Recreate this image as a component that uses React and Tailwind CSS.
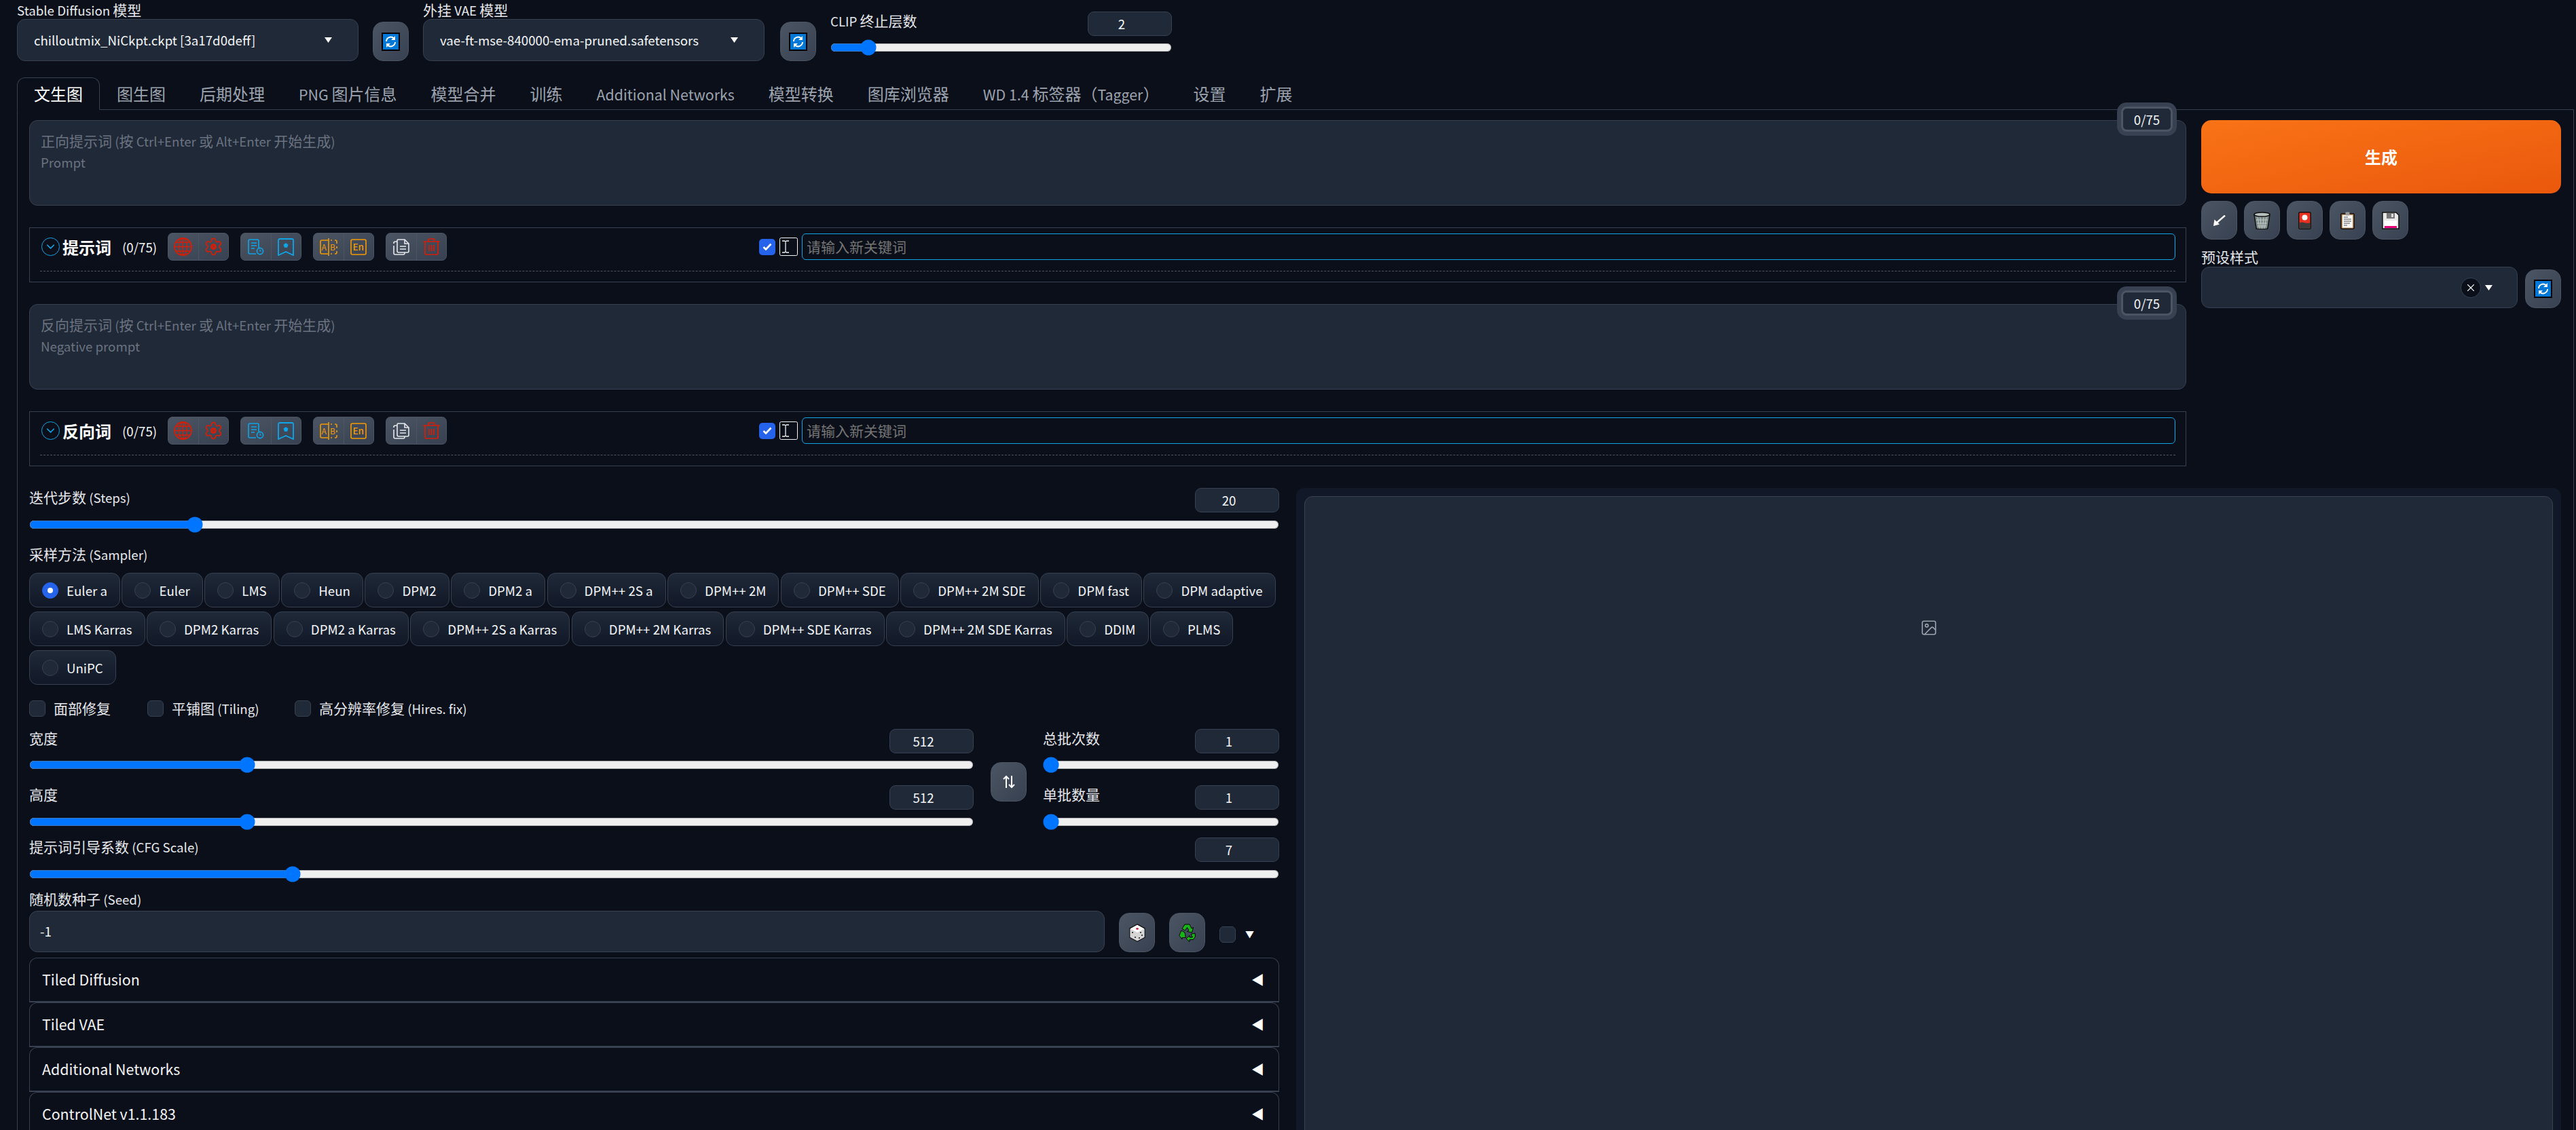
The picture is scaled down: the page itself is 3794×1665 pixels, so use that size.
import { ChevronDown, Image, Settings, X } from 'lucide-react';

const RED = '#d81e06';
const BLUE = '#0ea5e9';
const AMBER = '#f59a00';

// Latin runs are narrower than the CJK font's own latin glyphs
function T({ children }) {
  return String(children).split(/([\x00-\x7f]+)/).map((part, i) =>
    /^[\x00-\x7f]+$/.test(part) ? <span key={i} className="text-[0.89em]">{part}</span> : part
  );
}

function RefreshIcon() {
  return (
    <svg width="27" height="27" viewBox="0 0 27 27">
      <rect width="27" height="27" fill="#000" />
      <rect x="2" y="2" width="23" height="23" fill="#0078d7" />
      <path d="M7 13a6.5 6.5 0 0 1 11-4.5" fill="none" stroke="#fff" strokeWidth="2" />
      <path d="M20 14a6.5 6.5 0 0 1-11 4.5" fill="none" stroke="#fff" strokeWidth="2" />
      <path d="M20 5v6h-6zM7 22v-6h6z" fill="#fff" />
    </svg>
  );
}

function Caret() {
  return (
    <svg width="11" height="8" viewBox="0 0 11 8" className="shrink-0">
      <path d="M0 0h11L5.5 8z" fill="#fff" />
    </svg>
  );
}

function ToolButton({ children, className = 'w-[53px] h-[58px]' }) {
  return (
    <button className={`flex shrink-0 items-center justify-center rounded-[15px] border border-[#4b5563] bg-linear-to-br from-[#4b5563] to-[#374151] ${className}`}>
      {children}
    </button>
  );
}

function Label({ children, className = '' }) {
  return <div className={`h-[31px] leading-[27px] text-[21px] text-[#e5e7eb] ${className}`}><T>{children}</T></div>;
}

function Dropdown({ text }) {
  return (
    <div className="flex h-[62px] items-center rounded-[12px] border border-[#374151] bg-[#1f2937] pl-[24px] pr-[38px]">
      <span className="flex-1 text-[21px] text-[#f3f4f6]"><T>{text}</T></span>
      <Caret />
    </div>
  );
}

function Slider({ label, min, max, value, tight }) {
  return (
    <div>
      <div className="flex items-start justify-between">
        <Label>{label}</Label>
        <div className="flex h-[36px] w-[124px] items-center justify-center rounded-[9px] border border-[#374151] bg-[#1f2937] pr-[24px] text-[21px] text-[#f3f4f6]">
          <T>{value}</T>
        </div>
      </div>
      <div className={tight ? 'pt-[5px]' : 'pt-[6px]'}>
        <input type="range" min={min} max={max} defaultValue={value} className="block h-4 w-full [zoom:1.5]" />
      </div>
    </div>
  );
}

function GlobeIcon() {
  return (
    <svg width="27" height="27" viewBox="0 0 27 27" fill="none" stroke={RED} strokeWidth="1.3">
      <circle cx="13.5" cy="13.5" r="12.5" strokeWidth="1.8" />
      <ellipse cx="13.5" cy="13.5" rx="6" ry="12.5" />
      <path d="M13.5 1v25M1 13.5h25M3 7h21M3 20h21" />
    </svg>
  );
}

function GearIcon() {
  return (
    <Settings size={29} color={RED} strokeWidth={1.4}>
      <circle cx="12" cy="12" r="1.5" />
    </Settings>
  );
}

function HistoryIcon() {
  return (
    <svg width="24" height="24" viewBox="0 0 24 24" fill="none" stroke={BLUE} strokeWidth="1.6">
      <path d="M12 22H3a2 2 0 0 1-2-2V3a2 2 0 0 1 2-2h11a2 2 0 0 1 2 2v10" />
      <path d="M5 6h8M5 10h8M5 14h5" />
      <circle cx="18" cy="18" r="4.6" />
      <path d="M18 15.6V18h2" strokeWidth="1.2" />
    </svg>
  );
}

function BookmarkIcon() {
  return (
    <svg width="24" height="26" viewBox="0 0 24 26" fill="none" stroke={BLUE} strokeWidth="1.8">
      <path d="M3 1h18a2 2 0 0 1 2 2v22l-11-5-11 5V3a2 2 0 0 1 2-2z" />
      <path d="M12 7l3.5 2.6-1.4 4.2H9.900L8.500 9.600z" fill={BLUE} stroke="none" />
    </svg>
  );
}

function SplitIcon() {
  return (
    <svg width="26" height="26" viewBox="0 0 26 26" fill="none" stroke={AMBER} strokeWidth="1.6">
      <path d="M12 3H3a2 2 0 0 0-2 2v16a2 2 0 0 0 2 2h9" />
      <path d="M16 3h2M22 3h1a2 2 0 0 1 2 2v3M25 12v3M25 19v2a2 2 0 0 1-2 2h-1M18 23h-2" />
      <path d="M13 0v26" />
      <text x="2.500" y="18" fontSize="12" fill={AMBER} stroke="none" fontFamily="Noto Sans CJK SC">A</text>
      <text x="15" y="18" fontSize="12" fill={AMBER} stroke="none" fontFamily="Noto Sans CJK SC">B</text>
    </svg>
  );
}

function EnIcon() {
  return (
    <svg width="24" height="24" viewBox="0 0 24 24" fill="none" stroke={AMBER} strokeWidth="1.6">
      <rect x="1" y="1" width="22" height="22" rx="2" />
      <text x="3.500" y="17" fontSize="13.500" fontWeight="500" fill={AMBER} stroke="none" fontFamily="Noto Sans CJK SC">En</text>
    </svg>
  );
}

function CopyIcon() {
  return (
    <svg width="24" height="25" viewBox="0 0 24 25" fill="none" stroke="#e5e7eb" strokeWidth="1.6">
      <path d="M7 2h10l6 6v11a2 2 0 0 1-2 2H8a2 2 0 0 1-2-2V3z" />
      <path d="M17 2v6h6" />
      <path d="M6 5H3a2 2 0 0 0-2 2v1M1 11v11a2 2 0 0 0 2 2h12a2 2 0 0 0 2-2v-1" />
      <path d="M10 12h9M10 16h9" />
    </svg>
  );
}

function BinIcon() {
  return (
    <svg width="25" height="25" viewBox="0 0 25 25" fill="none" stroke={RED} strokeWidth="1.7">
      <path d="M0 5h25M8 5V2a1 1 0 0 1 1-1h7a1 1 0 0 1 1 1v3" />
      <path d="M3 5v17a2 2 0 0 0 2 2h15a2 2 0 0 0 2-2V5" />
      <path d="M9 10v9M12.500 10v9M16 10v9" />
    </svg>
  );
}

function IconGroup({ left, right }) {
  return (
    <div className="flex h-[41px] w-[90px] shrink-0 rounded-[7px] border border-[#4b5563] bg-linear-to-br from-[#4b5563] to-[#374151]">
      <div className="flex flex-1 items-center justify-center border-r border-[#4b5563]">{left}</div>
      <div className="flex flex-1 items-center justify-center">{right}</div>
    </div>
  );
}

function CursorBox() {
  return (
    <svg width="27" height="27" viewBox="0 0 27 27" className="shrink-0" fill="none">
      <rect x="0.500" y="0.500" width="26" height="26" rx="2" stroke="#f3f4f6" />
      <path d="M4 5h3.500L9 6l1.500-1H14M9 6v15M4 22h3.500L9 21l1.500 1H14" stroke="#f3f4f6" strokeWidth="1.300" />
    </svg>
  );
}

function TagPanel({ title }) {
  return (
    <div className="border border-[#374151] px-[15px] pt-[7px]">
      <div className="flex items-center border-b border-dashed border-[#4b5563] pb-[15px]">
        <div className="flex w-[1059px] shrink-0 items-center">
          <div className="ml-[2px] flex h-[27px] w-[27px] shrink-0 items-center justify-center rounded-full border-[1.5px] border-[#0ea5e9]">
            <ChevronDown size={19} color="#0ea5e9" strokeWidth={1.8} />
          </div>
          <span className="ml-[4px] w-[88px] text-[24px] font-bold text-white">{title}</span>
          <span className="w-[67px] text-[21px] text-[#f3f4f6]"><T>(0/75)</T></span>
          <div className="flex gap-[17px]">
            <IconGroup left={<GlobeIcon />} right={<GearIcon />} />
            <IconGroup left={<HistoryIcon />} right={<BookmarkIcon />} />
            <IconGroup left={<SplitIcon />} right={<EnIcon />} />
            <IconGroup left={<CopyIcon />} right={<BinIcon />} />
          </div>
        </div>
        <div className="flex flex-1 items-center">
          <div className="flex h-[24px] w-[24px] shrink-0 items-center justify-center rounded-[5px] bg-[#2563eb]">
            <svg width="14" height="11" viewBox="0 0 14 11"><path d="M1.500 6l3.500 3.500L12.500 1.500" fill="none" stroke="#fff" strokeWidth="2.600" /></svg>
          </div>
          <div className="ml-[6px]"><CursorBox /></div>
          <div className="ml-[6px] flex h-[39px] flex-1 items-center rounded-[6px] border border-[#0ea5e9] pl-[6px] text-[21px] text-[#757575]">
            请输入新关键词
          </div>
        </div>
      </div>
      <div className="h-[15px]" />
    </div>
  );
}

function PromptBox({ hint, sub }) {
  return (
    <div className="relative h-[126px] rounded-[12px] border border-[#374151] bg-[#1f2937] px-[16px] pt-[14px] text-[21px] leading-[30px] text-[#6b7280]">
      <div><T>{hint}</T></div>
      <div><T>{sub}</T></div>
      <div className="absolute right-[19px] top-[-21px] flex h-[37px] w-[76px] items-center justify-center rounded-[8px] border-[3px] border-[#4b5563] bg-[#1f2937] text-[21px] text-[#f3f4f6] shadow-[0_0_0_6px_#374151]">
        <T>0/75</T>
      </div>
    </div>
  );
}

function TrashEmoji() {
  return (
    <svg width="25" height="26" viewBox="0 0 25 26">
      <path d="M1 4h23l-3 20a2 2 0 0 1-2 1.500H6A2 2 0 0 1 4 24z" fill="#7d8a88" stroke="#111" strokeWidth="1.500" />
      <ellipse cx="12.500" cy="4" rx="11.500" ry="3" fill="#b6c0bd" stroke="#111" strokeWidth="1.500" />
      <path d="M6 8l3 17M10 8l1.500 17M15 8l-1.500 17M19 8l-3 17M4 12h17M5 17h15M6 21h13" stroke="#c7d0cd" strokeWidth="0.900" fill="none" />
    </svg>
  );
}

function CardEmoji() {
  return (
    <svg width="19" height="26" viewBox="0 0 19 26">
      <rect x="0.750" y="0.750" width="17.500" height="24.500" rx="2" fill="#e8321f" stroke="#111" strokeWidth="1.500" />
      <circle cx="9.500" cy="8.500" r="4" fill="#fff" />
      <path d="M1.500 25v-8c4-3 7-1 9-.5s5 .5 7-.5v9z" fill="#3a3a3a" />
    </svg>
  );
}

function ClipboardEmoji() {
  return (
    <svg width="21" height="26" viewBox="0 0 21 26">
      <rect x="0.750" y="2.750" width="19.500" height="22.500" rx="2" fill="#b8844f" stroke="#111" strokeWidth="1.500" />
      <rect x="3" y="5" width="15" height="18.500" fill="#f5f5f5" />
      <rect x="7.500" y="0.500" width="6" height="5" rx="1" fill="#999" />
      <path d="M5 8h6M5 11h11M5 14h11M5 17h9M5 20h5" stroke="#555" strokeWidth="1.200" />
    </svg>
  );
}

function FloppyEmoji() {
  return (
    <svg width="26" height="26" viewBox="0 0 26 26">
      <path d="M1 1h20l4 4v20H1z" fill="#e8e8e8" stroke="#111" strokeWidth="1.500" />
      <rect x="7" y="2" width="12" height="8" fill="#777" />
      <rect x="14" y="3" width="3" height="5" fill="#ddd" />
      <rect x="4" y="13" width="18" height="11" fill="#fff" />
      <rect x="4" y="21" width="18" height="3" fill="#e6007e" />
    </svg>
  );
}

function DiceEmoji() {
  return (
    <svg width="24" height="27" viewBox="0 0 24 27">
      <path d="M12 1l11 6v13l-11 6-11-6V7z" fill="#efefef" stroke="#111" strokeWidth="1.500" />
      <path d="M1.500 7.500L12 13l10.500-5.500v12.500L12 25.500 1.500 20z" fill="#d6d6d6" />
      <path d="M12 1.800l10 5.500L12 12.800 2 7.300z" fill="#fff" />
      <ellipse cx="12" cy="7.500" rx="1.800" ry="1.300" fill="#c8102e" />
      <circle cx="5" cy="13" r="1.100" fill="#222" /><circle cx="9" cy="20" r="1.100" fill="#222" />
      <circle cx="15" cy="21" r="1.100" fill="#222" /><circle cx="19" cy="17" r="1.100" fill="#222" /><circle cx="17" cy="13" r="1.100" fill="#222" />
    </svg>
  );
}

function RecycleEmoji() {
  return (
    <svg width="25" height="27" viewBox="0 0 25 27">
      <g fill="#17b317" stroke="#000" strokeWidth="1" strokeLinejoin="round">
        <path d="M9 1h7l3 6 2.500-1.500L19.500 13l-7-1.500 2.500-1.500-2.500-4.500L9.500 10 5 7.500z" />
        <path d="M4 10l5 3 1.500 7.500H5V23L.8 17.500z" />
        <path d="M24 14l.5 5-3 4.500H16V26.500L11 22l5-4.500v2.500h4.500L18 15.500z" />
      </g>
    </svg>
  );
}

function Checkbox({ text, className = '' }) {
  return (
    <div className={`flex items-center ${className}`}>
      <div className="h-[24px] w-[24px] rounded-[6px] border border-[#374151] bg-[#1f2937]" />
      <span className="ml-[12px] text-[21px] text-[#e5e7eb]"><T>{text}</T></span>
    </div>
  );
}

function Accordion({ title }) {
  return (
    <div className="flex h-[66px] shrink-0 items-center justify-between rounded-t-[12px] border-x border-t border-b-2 border-[#374151] pb-[3px] pl-[18px] pr-[21px]">
      <span className="text-[24px] text-[#f3f4f6]"><T>{title}</T></span>
      <span className="text-[19px] leading-none text-white">◀</span>
    </div>
  );
}

const samplers = [
  'Euler a', 'Euler', 'LMS', 'Heun', 'DPM2', 'DPM2 a', 'DPM++ 2S a', 'DPM++ 2M', 'DPM++ SDE', 'DPM++ 2M SDE', 'DPM fast', 'DPM adaptive',
  'LMS Karras', 'DPM2 Karras', 'DPM2 a Karras', 'DPM++ 2S a Karras', 'DPM++ 2M Karras', 'DPM++ SDE Karras', 'DPM++ 2M SDE Karras', 'DDIM', 'PLMS',
  'UniPC',
];

const tabs = ['文生图', '图生图', '后期处理', 'PNG 图片信息', '模型合并', '训练', 'Additional Networks', '模型转换', '图库浏览器', 'WD 1.4 标签器（Tagger）', '设置', '扩展'];

export default function App() {
  return (
    <div className="h-[1665px] w-[3794px] overflow-hidden bg-[#0b0f19] font-['Noto_Sans_CJK_SC','Noto_Sans',sans-serif] text-[21px] text-[#f3f4f6]">
      {/* model selectors */}
      <div className="flex h-[114px] items-start pl-[25px]">
        <div className="w-[503px]">
          <div className="h-[28px] text-[21px] leading-[28px] text-[#e5e7eb]"><T>Stable Diffusion 模型</T></div>
          <Dropdown text="chilloutmix_NiCkpt.ckpt [3a17d0deff]" />
        </div>
        <div className="ml-[21px] mt-[32px]"><ToolButton><RefreshIcon /></ToolButton></div>
        <div className="ml-[21px] w-[503px]">
          <div className="h-[28px] text-[21px] leading-[28px] text-[#e5e7eb]"><T>外挂 VAE 模型</T></div>
          <Dropdown text="vae-ft-mse-840000-ema-pruned.safetensors" />
        </div>
        <div className="ml-[23px] mt-[32px]"><ToolButton><RefreshIcon /></ToolButton></div>
        <div className="ml-[21px] mt-[17px] w-[503px]">
          <Slider label="CLIP 终止层数" min={1} max={12} value={2} tight />
        </div>
      </div>

      <div className="ml-[25px] mr-[3px]">
        {/* tabs */}
        <div className="flex h-[48px] border-b border-[#374151]">
          {tabs.map((tab, i) => (
            <button
              key={tab}
              className={`h-[48px] border px-[24px] text-[24px] ${i === 0 ? 'rounded-t-[12px] border-[#374151] border-b-[#0b0f19] text-white' : 'border-transparent text-[#9ca3af]'}`}
            >
              <T>{tab}</T>
            </button>
          ))}
        </div>

        <div className="h-[1600px] border-x border-[#374151] pl-[17px] pr-[18px] pt-[15px]">
          <div className="flex gap-[22px]">
            <div className="flex w-[3177px] flex-col gap-[32px]">
              <PromptBox hint="正向提示词 (按 Ctrl+Enter 或 Alt+Enter 开始生成)" sub="Prompt" />
              <TagPanel title="提示词" />
              <PromptBox hint="反向提示词 (按 Ctrl+Enter 或 Alt+Enter 开始生成)" sub="Negative prompt" />
              <TagPanel title="反向词" />
            </div>
            <div className="w-[530px]">
              <button className="h-[108px] w-full rounded-[15px] bg-linear-to-br from-[#f97316] to-[#ea580c] text-[24px] font-bold text-white">生成</button>
              <div className="mt-[11px] flex gap-[10px]">
                <ToolButton className="h-[57px] w-[53px]">
                  <svg width="18" height="16" viewBox="0 0 18 16" fill="none"><path d="M17 .5L5 11" stroke="#fff" strokeWidth="2.400" /><path d="M0 16l1.500-9.500 7.500 7z" fill="#fff" /></svg>
                </ToolButton>
                <ToolButton className="h-[57px] w-[53px]"><TrashEmoji /></ToolButton>
                <ToolButton className="h-[57px] w-[53px]"><CardEmoji /></ToolButton>
                <ToolButton className="h-[57px] w-[53px]"><ClipboardEmoji /></ToolButton>
                <ToolButton className="h-[57px] w-[53px]"><FloppyEmoji /></ToolButton>
              </div>
              <div className="mt-[12px] h-[28px] text-[21px] leading-[26px] text-[#e5e7eb]">预设样式</div>
              <div className="flex items-end gap-[11px]">
                <div className="flex h-[61px] w-[466px] items-center justify-end gap-[6px] rounded-[12px] border border-[#374151] bg-[#1f2937] pr-[36px]">
                  <div className="flex h-[30px] w-[30px] items-center justify-center rounded-full border border-[#374151] bg-[#0b0f19]">
                    <X size={18} color="#f3f4f6" strokeWidth={1.5} />
                  </div>
                  <Caret />
                </div>
                <ToolButton className="h-[57px] w-[53px]"><RefreshIcon /></ToolButton>
              </div>
            </div>
          </div>

          <div className="mt-[32px] flex gap-[25px]">
            {/* settings column */}
            <div className="w-[1841px] shrink-0">
              <Slider label="迭代步数 (Steps)" min={1} max={150} value={20} />

              <Label className="mt-[18px]">采样方法 (Sampler)</Label>
              <div className="mt-[10px] flex flex-wrap gap-x-[2.5px] gap-y-[6px]">
                {samplers.map((name, i) => (
                  <div key={name} className="flex h-[51px] items-center gap-[12px] rounded-[12px] border border-[#374151] bg-linear-to-t from-[#111827] to-[#1f2937] px-[18px] text-[21px] text-[#f3f4f6]">
                    <span className={`flex h-[24px] w-[24px] items-center justify-center rounded-full border ${i === 0 ? 'border-[#2563eb] bg-[#2563eb]' : 'border-[#374151] bg-[#1f2937]'}`}>
                      {i === 0 && <span className="h-[8px] w-[8px] rounded-full bg-white" />}
                    </span>
                    <span><T>{name}</T></span>
                  </div>
                ))}
              </div>

              <div className="mt-[23px] flex h-[24px]">
                <Checkbox text="面部修复" className="w-[174px]" />
                <Checkbox text="平铺图 (Tiling)" className="w-[217px]" />
                <Checkbox text="高分辨率修复 (Hires. fix)" />
              </div>

              <div className="mt-[18px] flex">
                <div className="flex w-[1391px] flex-col gap-[18px]">
                  <Slider label="宽度" min={64} max={2048} value={512} tight />
                  <Slider label="高度" min={64} max={2048} value={512} />
                </div>
                <div className="ml-[25px] mt-[49px]"><ToolButton>
                  <svg width="20" height="20" viewBox="0 0 20 20" fill="none" stroke="#fff" strokeWidth="2"><path d="M6 19V2M2 6l4-4 4 4M14 1v17M10 14l4 4 4-4" /></svg>
                </ToolButton></div>
                <div className="ml-[24px] flex flex-1 flex-col gap-[18px]">
                  <Slider label="总批次数" min={1} max={100} value={1} tight />
                  <Slider label="单批数量" min={1} max={8} value={1} />
                </div>
              </div>

              <div className="mt-[11px]"><Slider label="提示词引导系数 (CFG Scale)" min={1} max={30} value={7} /></div>

              <Label className="mt-[11px]">随机数种子 (Seed)</Label>
              <div className="flex">
                <div className="flex h-[61px] w-[1584px] items-center rounded-[12px] border border-[#374151] bg-[#1f2937] pl-[15px] text-[21px]"><T>-1</T></div>
                <div className="ml-[21px] mt-[3px]"><ToolButton><DiceEmoji /></ToolButton></div>
                <div className="ml-[21px] mt-[3px]"><ToolButton><RecycleEmoji /></ToolButton></div>
                <div className="ml-[21px] mt-[23px] h-[24px] w-[24px] rounded-[6px] border border-[#374151] bg-[#1f2937]" />
                <span className="ml-[14px] mt-[19px] text-[13px] leading-[30px] text-white">▼</span>
              </div>

              <div className="mt-[8px] flex flex-col">
                <Accordion title="Tiled Diffusion" />
                <Accordion title="Tiled VAE" />
                <Accordion title="Additional Networks" />
                <Accordion title="ControlNet v1.1.183" />
              </div>
            </div>

            {/* output preview */}
            <div className="h-[1200px] flex-1 rounded-[12px] bg-[#111827] p-[12px]">
              <div className="flex h-full justify-center rounded-[12px] border border-[#374151] bg-[#1f2937] pt-[180px]">
                <Image size={26} color="#9ca3af" strokeWidth={1.5} />
              </div>
            </div>
          </div>
        </div>
      </div>
    </div>
  );
}
